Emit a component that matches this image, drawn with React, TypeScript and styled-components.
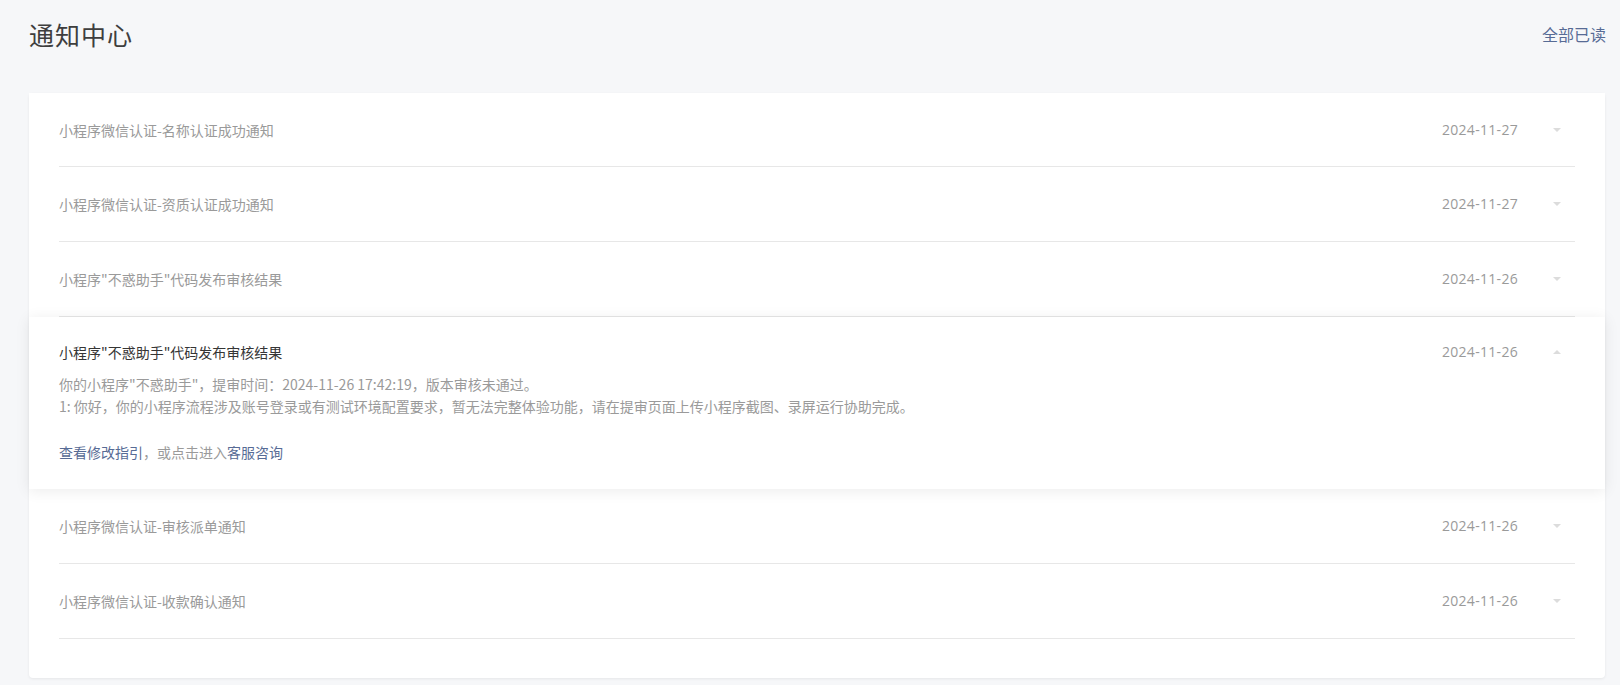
import { Fragment, FunctionComponent, useState } from "react";
import styled, { createGlobalStyle } from "styled-components";

const GlobalStyle = createGlobalStyle`
  html, body {
    margin: 0;
    padding: 0;
    background: #f6f7f9;
    font-family: "Open Sans", "Noto Sans CJK SC", sans-serif;
  }
`;

interface Notice {
  id: number;
  title: string;
  date: string;
  lines?: string[];
}

const notices: Notice[] = [
  { id: 1, title: "小程序微信认证-名称认证成功通知", date: "2024-11-27" },
  { id: 2, title: "小程序微信认证-资质认证成功通知", date: "2024-11-27" },
  { id: 3, title: "小程序\"不惑助手\"代码发布审核结果", date: "2024-11-26" },
  {
    id: 4,
    title: "小程序\"不惑助手\"代码发布审核结果",
    date: "2024-11-26",
    lines: [
      "你的小程序\"不惑助手\"，提审时间：2024-11-26 17:42:19，版本审核未通过。",
      "1: 你好，你的小程序流程涉及账号登录或有测试环境配置要求，暂无法完整体验功能，请在提审页面上传小程序截图、录屏运行协助完成。",
    ],
  },
  { id: 5, title: "小程序微信认证-审核派单通知", date: "2024-11-26" },
  { id: 6, title: "小程序微信认证-收款确认通知", date: "2024-11-26" },
];

const Page = styled.div`
  padding: 0 15px 8px 29px;
`;

const Header = styled.div`
  display: flex;
  align-items: center;
  justify-content: space-between;
  height: 67px;
  margin-bottom: 26px;
`;

const Title = styled.h1`
  margin: 0;
  font-size: 25px;
  font-weight: normal;
  color: #3e3e3e;
  font-family: "Noto Sans CJK SC", sans-serif;
  letter-spacing: 1px;
`;

const ReadAll = styled.a`
  font-size: 16px;
  color: #576b95;
  cursor: pointer;
  font-family: "Noto Sans CJK SC", sans-serif;
  margin-right: -1px;
`;

const Card = styled.div`
  background: #fff;
  border-radius: 4px;
  box-shadow: 0 1px 3px rgba(0, 0, 0, 0.07);
  padding-bottom: 39px;
`;

const Item = styled.div<{ $open: boolean }>`
  position: relative;
  padding: 0 30px;
  background: #fff;
  box-shadow: ${(p) => (p.$open ? "0 2px 14px rgba(0, 0, 0, 0.08)" : "none")};
  z-index: ${(p) => (p.$open ? 1 : 0)};
`;

const Row = styled.div<{ $open: boolean; $last: boolean; $first: boolean }>`
  display: flex;
  align-items: center;
  padding: ${(p) =>
    p.$open ? "24px 0 10px" : p.$first ? "26px 0 25px" : "26px 0 26px"};
  line-height: 22px;
  border-bottom: ${(p) => (p.$open || p.$last ? "none" : "1px solid #e7e7e7")};
  cursor: pointer;
`;

const ItemTitle = styled.div<{ $open: boolean }>`
  flex: 1;
  font-size: 14px;
  color: ${(p) => (p.$open ? "#353535" : "#9a9a9a")};
  font-family: "Noto Sans CJK SC", sans-serif;
`;

const ItemDate = styled.div`
  font-size: 14px;
  color: #9a9a9a;
  letter-spacing: 0.3px;
`;

const Arrow = styled.span<{ $up: boolean }>`
  width: 0;
  height: 0;
  margin: 0 14px 0 35px;
  border-left: 4px solid transparent;
  border-right: 4px solid transparent;
  ${(p) =>
    p.$up
      ? "border-bottom: 4px solid #dcdcdc;"
      : "border-top: 4px solid #dcdcdc;"}
`;

const Body = styled.div`
  padding-bottom: 26px;
  font-size: 14px;
  line-height: 22px;
  color: #9a9a9a;
  font-family: "Noto Sans CJK SC", sans-serif;
`;

const Line = styled.p`
  margin: 0;
`;

const Footer = styled.p`
  margin: 24px 0 0;
`;

const Link = styled.a`
  color: #576b95;
  cursor: pointer;
`;

const Separator = styled.div`
  margin: 0 30px;
  border-bottom: 1px solid #e7e7e7;
`;

const App: FunctionComponent = () => {
  const [openId, setOpenId] = useState<number | null>(4);

  return (
    <Page>
      <GlobalStyle />
      <Header>
        <Title>通知中心</Title>
        <ReadAll>全部已读</ReadAll>
      </Header>
      <Card>
        {notices.map((n, i) => {
          const open = openId === n.id;
          const nextOpen = notices[i + 1] && notices[i + 1].id === openId;
          return (
            <Fragment key={n.id}>
              <Item $open={open}>
                <Row
                  $open={open}
                  $first={i === 0}
                  $last={!!nextOpen}
                  onClick={() => setOpenId(open ? null : n.id)}
                >
                  <ItemTitle $open={open}>{n.title}</ItemTitle>
                  <ItemDate>{n.date}</ItemDate>
                  <Arrow $up={open} />
                </Row>
                {open && (
                  <Body>
                    {(n.lines ?? []).map((l) => (
                      <Line key={l}>{l}</Line>
                    ))}
                    <Footer>
                      <Link>查看修改指引</Link>，或点击进入<Link>客服咨询</Link>
                    </Footer>
                  </Body>
                )}
              </Item>
              {nextOpen && <Separator />}
            </Fragment>
          );
        })}
      </Card>
    </Page>
  );
};

export default App;
